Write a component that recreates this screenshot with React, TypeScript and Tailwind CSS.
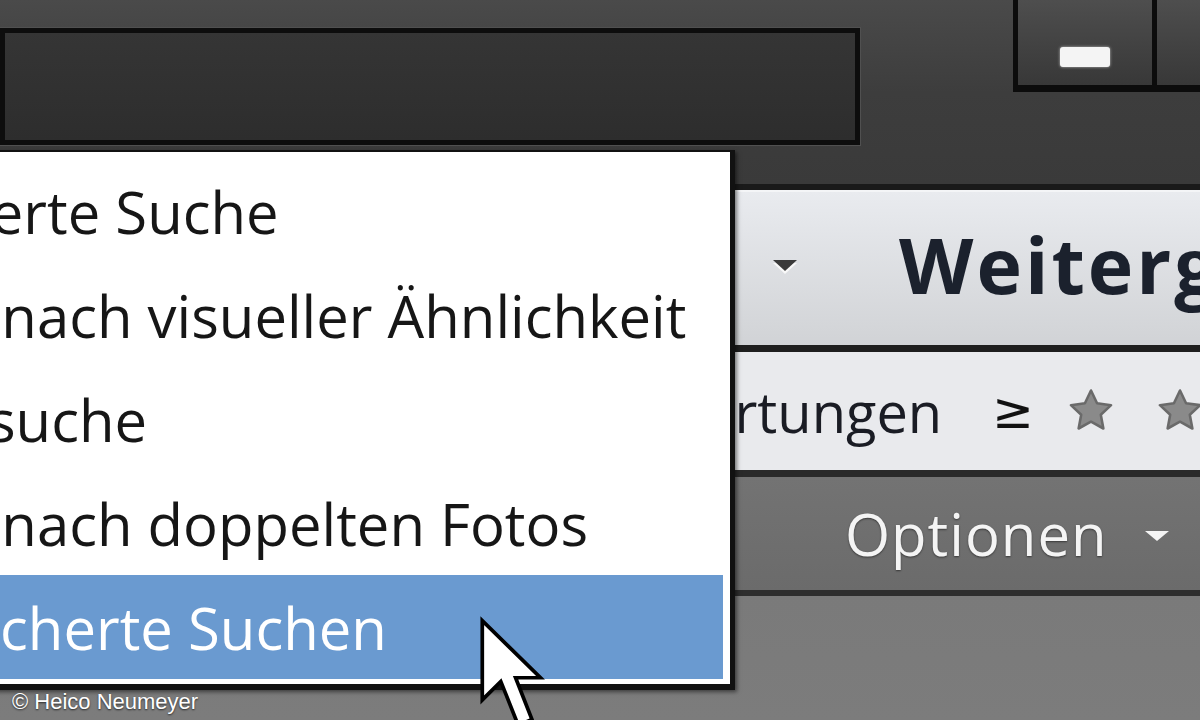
import React from "react";

const Star = () => (
  <svg width="56" height="56" viewBox="0 0 24 24" className="shrink-0">
    <path
      d="M12 3.2l2.6 5.5 6 .8-4.4 4.1 1.1 5.9L12 16.6l-5.3 2.9 1.1-5.9-4.4-4.1 6-.8z"
      fill="#8a8a8a"
      stroke="#6a6a6a"
      strokeWidth="1.1"
      strokeLinejoin="round"
    />
  </svg>
);

const menuItems = [
  { text: "Erweiterte Suche", active: false, pad: "pl-[22px]" },
  { text: "Suche nach visueller Ähnlichkeit", active: false, pad: "pl-[23px]" },
  { text: "Objektsuche", active: false, pad: "pl-[9px]" },
  { text: "Suche nach doppelten Fotos", active: false, pad: "pl-[23px]" },
  { text: "Gespeicherte Suchen", active: true, pad: "pl-[15px]" },
];

export default function App() {
  return (
    <div className="relative w-[1200px] h-[720px] overflow-hidden flex flex-col bg-[#787878] font-['Open_Sans',sans-serif]">
      {/* top bar */}
      <header className="h-[190px] shrink-0 flex items-start justify-between bg-gradient-to-b from-[#4a4a4a] via-[#3d3d3d] to-[#3a3a3a] border-b-[6px] border-[#1a1a1a]">
        <div className="mt-[28px] w-[860px] h-[117px] border-[5px] border-[#0d0d0d] bg-gradient-to-b from-[#353535] to-[#2d2d2d] shadow-[0_0_0_1px_#505050]" />
        <div className="flex h-[92px]">
          <div className="w-[139px] h-full flex justify-center pt-[47px] border-l-[5px] border-b-[7px] border-[#0c0c0c] bg-gradient-to-b from-[#4e4e4e] to-[#383838]">
            <div className="w-[50px] h-[20px] bg-[#f4f4f4] rounded-[3px] shadow-[0_0_3px_#bbb]" />
          </div>
          <div className="w-[48px] h-full border-l-[5px] border-b-[7px] border-[#0c0c0c] bg-gradient-to-b from-[#4e4e4e] to-[#383838]" />
        </div>
      </header>

      {/* tab panel */}
      <div className="h-[155px] shrink-0 flex items-center pb-[8px] bg-gradient-to-b from-[#e9ebef] to-[#d1d3d6] border-t-[2px] border-[#f4f5f7] whitespace-nowrap">
        <svg width="28" height="16" viewBox="0 0 28 16" className="ml-[771px] shrink-0 mt-[4px]">
          <path d="M2 4 L26 4 L14 15 Z" fill="#f8f8f8" />
          <path d="M2 1 L26 1 L14 12 Z" fill="#3a3a3a" />
        </svg>
        <span className="ml-[100px] text-[77px] font-bold text-[#1b212d] leading-none tracking-[3px]">
          Weitergeben
        </span>
      </div>
      <div className="h-[7px] shrink-0 bg-[#1e1e1e]" />

      {/* filter row */}
      <div className="h-[118px] shrink-0 flex items-center bg-[#e9eaed] whitespace-nowrap pl-[592px]">
        <span className="text-[56px] text-[#1a1c24] leading-none">Bewertungen</span>
        <span className="ml-[50px] text-[50px] text-[#111] leading-none font-['DejaVu_Sans',sans-serif]">≥</span>
        <div className="ml-[29px] flex gap-[33px] items-center">
          <Star />
          <Star />
          <Star />
        </div>
      </div>
      <div className="h-[7px] shrink-0 bg-[#2a2a2a]" />

      {/* options bar */}
      <div className="h-[113px] shrink-0 flex items-center bg-gradient-to-b from-[#737373] to-[#6b6b6b] whitespace-nowrap pl-[845px]">
        <span className="text-[58px] text-[#f4f4f4] leading-none tracking-[1px] [text-shadow:0_1px_2px_rgba(0,0,0,0.5)]">
          Optionen
        </span>
        <svg width="26" height="12" viewBox="0 0 26 12" className="ml-[36px] shrink-0 mt-[4px]">
          <path d="M1 1 L25 1 L13 11 Z" fill="#f4f4f4" />
        </svg>
      </div>
      <div className="h-[6px] shrink-0 bg-[#2e2e2e]" />
      <div className="flex-1 bg-gradient-to-b from-[#7a7a7a] to-[#7c7c7c]" />

      {/* dropdown menu overlay */}
      <div className="absolute top-[150px] left-[-200px] w-[935px] bg-white border-t-[2px] border-r-[5px] border-b-[6px] border-[#111] pt-[7px] pr-[7px] pb-[5px] shadow-[2px_2px_4px_rgba(0,0,0,0.5)]">
        {menuItems.map((item) => (
          <div
            key={item.text}
            className={
              (item.active
                ? "h-[104px] flex items-center bg-[#6a9ad0] text-white text-[58px] whitespace-nowrap "
                : "h-[104px] flex items-center text-[#161616] text-[58px] whitespace-nowrap ") + item.pad
            }
          >
            {item.text}
          </div>
        ))}
      </div>

      {/* copyright */}
      <div className="absolute left-[12px] top-[685px] text-[22px] text-white font-['Liberation_Sans',Arial,sans-serif] [text-shadow:0_1px_2px_rgba(0,0,0,0.7)] whitespace-nowrap">
        © Heico Neumeyer
      </div>

      {/* mouse cursor */}
      <svg
        width="74"
        height="117"
        viewBox="-1 -1 14 22"
        className="absolute left-[477px] top-[615px]"
      >
        <path
          d="M0 0 L0 15 L3.5 11.5 L6.8 19.8 L9.4 18.7 L6.3 10.8 L11 10.8 Z"
          fill="#ffffff"
          stroke="#000000"
          strokeWidth="0.7"
          strokeLinejoin="miter"
        />
      </svg>
    </div>
  );
}
